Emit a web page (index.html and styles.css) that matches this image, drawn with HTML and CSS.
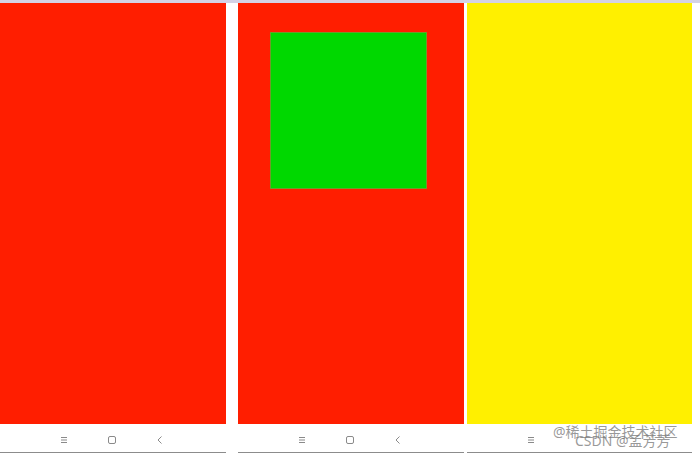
FILE: index.html
```html
<!DOCTYPE html>
<html>
<head>
<meta charset="utf-8">
<link rel="stylesheet" href="styles.css">
</head>
<body>
<div class="topline"></div>
<div class="row">
  <div class="phone p1">
    <div class="screen red"></div>
    <div class="nav">
      <svg class="ico" viewBox="0 0 10 10"><path d="M2 2.5H8M2 5H8M2 7.5H8" stroke="#8a8a8a" stroke-width="1" fill="none"/></svg>
      <svg class="ico" viewBox="0 0 10 10"><rect x="1.5" y="1.5" width="7" height="7" rx="1.5" stroke="#8a8a8a" stroke-width="1" fill="none"/></svg>
      <svg class="ico" viewBox="0 0 10 10"><path d="M6.5 1.5L3 5L6.5 8.5" stroke="#8a8a8a" stroke-width="1" fill="none"/></svg>
    </div>
  </div>
  <div class="phone p2">
    <div class="screen red withbox"><div class="green"></div></div>
    <div class="nav">
      <svg class="ico" viewBox="0 0 10 10"><path d="M2 2.5H8M2 5H8M2 7.5H8" stroke="#8a8a8a" stroke-width="1" fill="none"/></svg>
      <svg class="ico" viewBox="0 0 10 10"><rect x="1.5" y="1.5" width="7" height="7" rx="1.5" stroke="#8a8a8a" stroke-width="1" fill="none"/></svg>
      <svg class="ico" viewBox="0 0 10 10"><path d="M6.5 1.5L3 5L6.5 8.5" stroke="#8a8a8a" stroke-width="1" fill="none"/></svg>
    </div>
  </div>
  <div class="phone p3">
    <div class="screen yellow"></div>
    <div class="nav">
      <svg class="ico" viewBox="0 0 10 10"><path d="M2 2.5H8M2 5H8M2 7.5H8" stroke="#8a8a8a" stroke-width="1" fill="none"/></svg>
    </div>
    <div class="wm wm1">@稀土掘金技术社区</div>
    <div class="wm wm2">CSDN @孟芳芳</div>
  </div>
</div>
</body>
</html>
```

FILE: styles.css
```css
html, body {
  margin: 0;
  padding: 0;
  background: #ffffff;
  width: 700px;
  height: 455px;
  overflow: hidden;
  font-family: "Noto Sans", "Noto Sans CJK SC", sans-serif;
}
.topline {
  height: 3px;
  background: #d4d2e6;
}
.row {
  display: flex;
  align-items: flex-start;
}
.phone {
  position: relative;
  display: flex;
  flex-direction: column;
  border-bottom: 1px solid #8c8c8c;
}
.p1 { width: 226px; }
.p2 { width: 226px; margin-left: 12px; }
.p3 { width: 225px; margin-left: 3px; }
.screen {
  height: 421px;
}
.red { background: #ff1e00; }
.yellow { background: #fff000; }
.withbox {
  padding: 29px 0 0 32px;
  box-sizing: border-box;
}
.green {
  width: 157px;
  height: 157px;
  box-sizing: border-box;
  background: #00d800;
  border: 1px solid #6e9c2a;
}
.nav {
  height: 28px;
  box-sizing: border-box;
  padding-top: 4px;
  display: flex;
  align-items: center;
  padding-left: 59px;
  gap: 38px;
  background: #ffffff;
}
.ico {
  width: 10px;
  height: 10px;
  display: block;
}
.wm {
  position: absolute;
  font-size: 14px;
  line-height: 16px;
  color: rgba(120, 120, 120, 0.75);
  white-space: nowrap;
}
.wm1 {
  left: 86px;
  top: 421px;
}
.wm2 {
  left: 108px;
  top: 430px;
}
```
